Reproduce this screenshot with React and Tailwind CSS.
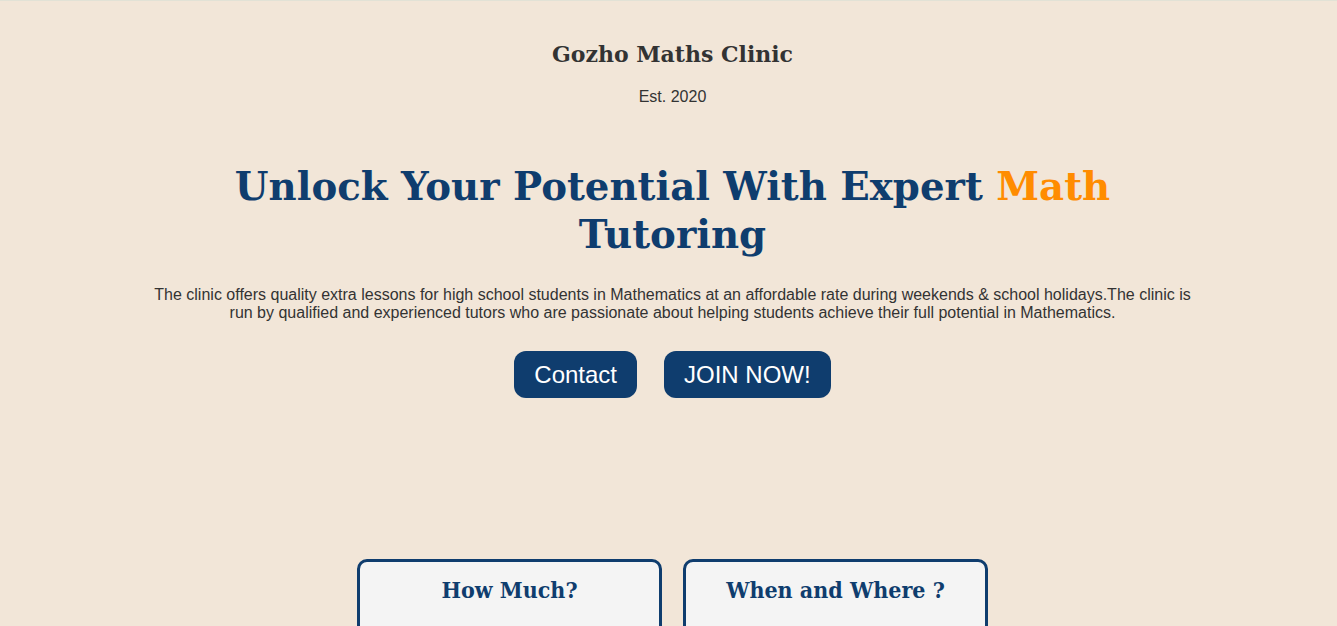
import React from 'react';

const InfoCard = ({ title }) => {
  return (
    <div className="w-[305px] h-[120px] bg-[#f4f4f4] border-[3px] border-[#0f3d6e] rounded-[10px] pt-[13px] text-center">
      <h3 className="text-[23px] leading-[30px] font-bold text-[#0f3d6e] [font-family:'DejaVu_Serif_Condensed','DejaVu_Serif',serif]">{title}</h3>
    </div>
  );
};

const App = () => {
  return (
    <div className="min-h-screen pl-2 bg-[#f2e6d8] border-t border-[#e2e2d6] text-[#333] [font-family:'Liberation_Sans',Arial,sans-serif] overflow-hidden">
      <header className="pt-[38px] text-center">
        <h2 className="text-[22px] font-bold leading-[30px] [font-family:'DejaVu_Serif',serif]">Gozho Maths Clinic</h2>
        <p className="mt-4 text-base">Est. 2020</p>
      </header>

      <section className="mt-[54px] flex flex-col items-center text-center">
        <h1 className="text-[38.7px] font-bold leading-[48px] text-[#0f3d6e] [font-family:'DejaVu_Serif',serif] max-w-[920px]">
          Unlock Your Potential With Expert <span className="text-[#ff8c00]">Math</span> Tutoring
        </h1>
        <p className="mt-[27px] w-[1050px] text-base leading-[18px]">
          The clinic offers quality extra lessons for high school students in Mathematics at an affordable rate during weekends &amp; school holidays.The clinic is run by qualified and experienced tutors who are passionate about helping students achieve their full potential in Mathematics.
        </p>
        <div className="mt-[29px] flex gap-[27px]">
          <button className="bg-[#0f3d6e] text-white text-2xl leading-[29px] px-5 py-[9px] rounded-xl">Contact</button>
          <button className="bg-[#0f3d6e] text-white text-2xl leading-[29px] px-5 py-[9px] rounded-xl">JOIN NOW!</button>
        </div>
      </section>

      <section className="mt-[161px] flex justify-center gap-[21px]">
        <InfoCard title="How Much?" />
        <InfoCard title="When and Where ?" />
      </section>
    </div>
  );
};

export default App;
